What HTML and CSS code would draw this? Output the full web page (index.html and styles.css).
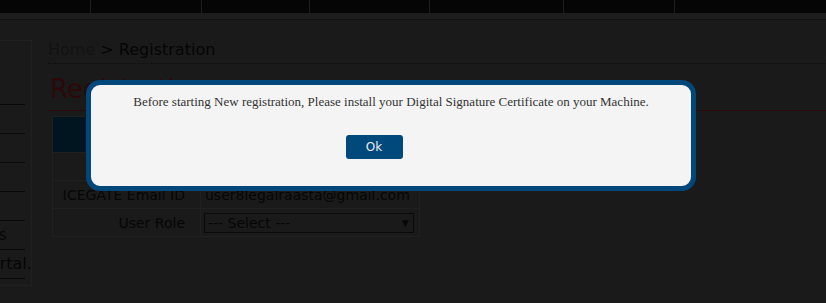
FILE: index.html
```html
<html>
<head>
    <title>Registration</title>
    <link rel="stylesheet" href="styles.css">
</head>
<body>
    <div class="topbar">
        <div class="topcell"></div>
        <div class="topcell"></div>
        <div class="topcell"></div>
        <div class="topcell"></div>
        <div class="topcell"></div>
        <div class="topcell"></div>
        <div class="topcell last"></div>
    </div>
    <div class="band"></div>

    <div class="main">
        <div class="sidebar">
            <div class="side-head"></div>
            <ul class="side-menu">
                <li>Home</li>
                <li>About</li>
                <li>Help</li>
                <li>Contact</li>
                <li>Downloads</li>
                <li>Visit UI portal.</li>
            </ul>
        </div>

        <div class="content">
            <div class="breadcrumb"><span class="crumb-home">Home</span> &gt; Registration</div>
            <h1 class="page-title">Registration</h1>

            <table class="reg-table">
                <tr class="head-row"><th colspan="2"></th></tr>
                <tr>
                    <td class="label">ICEGATE ID</td>
                    <td class="value">user8legalraasta</td>
                </tr>
                <tr>
                    <td class="label">ICEGATE Email ID</td>
                    <td class="value">user8legalraasta@gmail.com</td>
                </tr>
                <tr>
                    <td class="label">User Role</td>
                    <td class="value">
                        <div class="select"><span>--- Select ---</span><span class="arrow">&#9660;</span></div>
                    </td>
                </tr>
            </table>
        </div>
    </div>

    <div class="modal">
        <p class="modal-text">Before starting New registration, Please install your Digital Signature Certificate on your Machine.</p>
        <div class="modal-actions">
            <button class="ok-btn">Ok</button>
        </div>
    </div>
</body>
</html>
```

FILE: styles.css
```css
body {
    margin: 0;
    background: #1a1a1a;
    font-family: 'DejaVu Sans', Verdana, sans-serif;
    color: #060606;
    overflow: hidden;
}

.topbar {
    display: grid;
    grid-template-columns: 91px 111px 108px 120px 134px 111px 1fr;
    height: 13px;
    background: #050505;
}

.topcell {
    border-right: 1px solid #1e1e1e;
}

.topcell.last {
    border-right: none;
}

.band {
    height: 6px;
    background: #1d1d1d;
    border-bottom: 1px solid #121212;
}

.main {
    display: flex;
    align-items: flex-start;
    margin-top: 20px;
}

.sidebar {
    width: 120px;
    margin-left: -88px;
    flex-shrink: 0;
    box-sizing: border-box;
    border: 1px solid #202020;
    border-left: none;
    padding-bottom: 6px;
    font-size: 16px;
}

.side-head {
    height: 63px;
    margin-right: 6px;
    border-bottom: 1px solid #090909;
}

.side-menu {
    list-style: none;
    margin: 0 6px 0 0;
    padding: 0;
}

.side-menu li {
    height: 28px;
    line-height: 28px;
    padding-left: 7px;
    white-space: nowrap;
    border-bottom: 1px solid #090909;
}

.content {
    flex: 1;
    margin-left: 16px;
}

.breadcrumb {
    font-size: 16px;
    line-height: 19px;
    padding-bottom: 4px;
    border-bottom: 1px dotted #0e0e0e;
    color: #050505;
}

.crumb-home {
    color: #131313;
}

.page-title {
    margin: 10px 0 0;
    padding: 0 0 6px 2px;
    font-size: 26px;
    line-height: 30px;
    font-weight: normal;
    color: #2b0909;
    border-bottom: 1px solid #2b0909;
}

.reg-table {
    margin: 5px 0 0 4px;
    width: 368px;
    border-collapse: collapse;
    font-size: 14px;
}

.reg-table td, .reg-table th {
    border: 1px solid #202020;
    padding: 0;
}

.reg-table tr {
    height: 28px;
}

.reg-table .head-row {
    height: 36px;
    background: #011520;
}

.label {
    width: 132px;
    text-align: right;
    padding-right: 15px !important;
}

.value {
    padding-left: 4px !important;
}

.select {
    display: flex;
    justify-content: space-between;
    align-items: center;
    width: 210px;
    height: 20px;
    box-sizing: border-box;
    margin-left: -1px;
    padding: 0 4px 0 3px;
    border: 1px solid #0a0a0a;
}

.arrow {
    font-size: 9px;
}

.modal {
    position: absolute;
    left: 86px;
    top: 80px;
    width: 610px;
    height: 111px;
    box-sizing: border-box;
    border: 5px solid #01477a;
    border-radius: 14px;
    background: #f4f4f4;
    padding: 9px 10px 0;
    text-align: center;
}

.modal-text {
    margin: 0;
    font-family: 'Liberation Serif', 'Times New Roman', serif;
    font-size: 13px;
    line-height: 15px;
    color: #333;
}

.modal-actions {
    display: flex;
    justify-content: center;
    margin-top: 26px;
}

.ok-btn {
    width: 57px;
    height: 24px;
    margin-right: 34px;
    border: none;
    border-radius: 3px;
    background: #00497a;
    color: #e8eef2;
    font-family: 'DejaVu Sans', sans-serif;
    font-size: 12px;
    cursor: pointer;
}
```
